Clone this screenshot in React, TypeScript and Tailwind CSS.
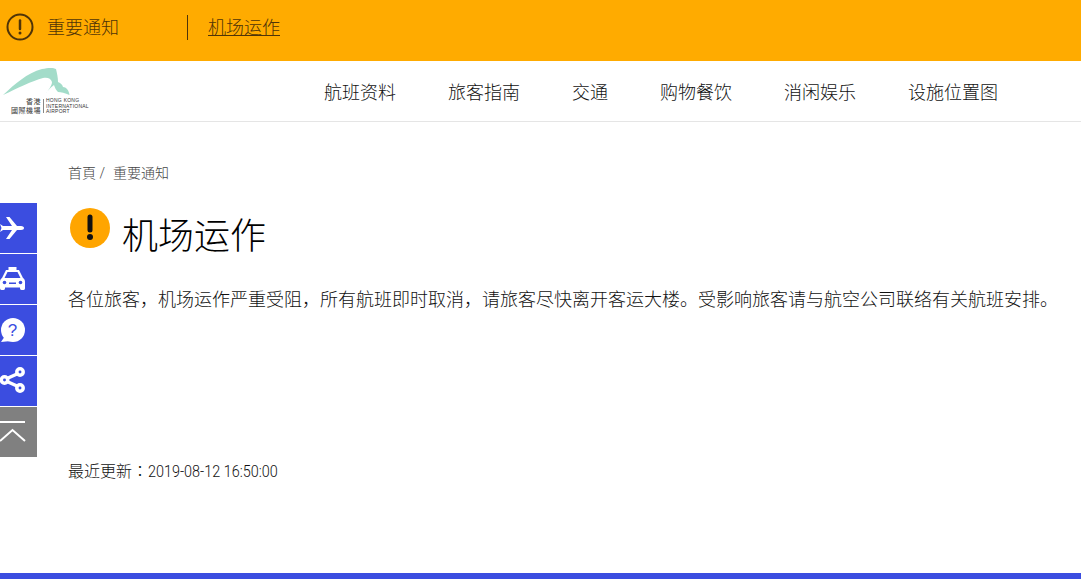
const navItems = ["航班资料", "旅客指南", "交通", "购物餐饮", "消闲娱乐", "设施位置图"];

function Logo() {
  return (
    <div className="relative h-[50px] w-[92px]">
      <svg width="72" height="30" viewBox="0 66 72 30" className="absolute left-0 top-0">
        <path
          d="M3 95 C15 84 27 73 42 69 C48 67.500 54 67.500 56 69 C57 73 58 78 58 82 C61 83 62.500 85 63 87 C66 87 69 90 69.500 95 C65 93 61 92 58 92 C56 90 55 88 54 85 C50 88 47 91 45 95 C48 90 52 86 52 82 C51 78 47 77 43 78 C32 81 18 88 3 95 Z"
          fill="#a3dcc9"
        />
      </svg>
      <div className="absolute right-[51px] top-[31px] text-right font-['Noto_Sans_CJK_TC',sans-serif] text-[7px] leading-[9px] tracking-[0.5px] text-[#333]">
        <div>香港</div>
        <div>國際機場</div>
      </div>
      <div className="absolute left-[43px] top-[33px] h-[14px] border-l border-[#888]" />
      <div className="absolute left-[46px] top-[32px] font-['Liberation_Sans',sans-serif] text-[5px] leading-[5.5px] tracking-[0.25px] text-[#333]">
        <div>HONG KONG</div>
        <div>INTERNATIONAL</div>
        <div>AIRPORT</div>
      </div>
    </div>
  );
}

function Rail() {
  return (
    <div className="absolute left-0 top-[203px] flex w-[37px] flex-col gap-px">
      <div className="h-[50px] bg-[#3b4de0]">
        <svg width="37" height="50" viewBox="0 0 37 50" fill="white">
          <path d="M0 21 L3 23 L12 23 L6 14 L9.500 14 L17 23 L21 23 C23 23 24 24 24 25 C24 26 23 27 21 27 L17 27 L9.500 36 L6 36 L12 27 L3 27 L0 29 L1.500 25 Z" />
        </svg>
      </div>
      <div className="h-[50px] bg-[#3b4de0]">
        <svg width="37" height="50" viewBox="0 0 37 50" fill="white">
          <path d="M8.500 13 H16.500 V16 H19 L23 24 C24.500 25 25 26 25 28 V34 C25 35 24.500 36 23.500 36 H21.500 C20.500 36 20 35 20 34 V33.500 H5 V34 C5 35 4.500 36 3.500 36 H1.500 C0.500 36 0 35 0 34 V28 C0 26 0.500 25 2 24 L6 16 H8.500 Z M7.500 18 L4.500 24 H20.500 L17.500 18 Z" fillRule="evenodd" />
          <rect x="9" y="28.500" width="7" height="1.500" fill="#3b4de0" />
          <circle cx="4.500" cy="28.500" r="1.800" fill="#3b4de0" />
          <circle cx="20.500" cy="28.500" r="1.800" fill="#3b4de0" />
        </svg>
      </div>
      <div className="h-[50px] bg-[#3b4de0]">
        <svg width="37" height="50" viewBox="0 0 37 50" fill="white">
          <circle cx="13" cy="25" r="12" />
          <path d="M5 31 L1 37 L11 36 Z" />
          <text x="12.500" y="31" fontSize="17" textAnchor="middle" fill="#3b4de0" fontFamily="Liberation Sans, sans-serif">?</text>
        </svg>
      </div>
      <div className="h-[50px] bg-[#3b4de0]">
        <svg width="37" height="50" viewBox="0 0 37 50" fill="none" stroke="white" strokeWidth="3.500">
          <path d="M7 22.500 L17 18 M7 25.500 L17 30" />
          <circle cx="4.500" cy="24" r="3.200" />
          <circle cx="20" cy="16" r="3.200" />
          <circle cx="20" cy="32" r="3.200" />
        </svg>
      </div>
      <div className="h-[50px] bg-[#808080]">
        <svg width="37" height="50" viewBox="0 0 37 50" fill="none" stroke="white" strokeWidth="2">
          <path d="M0 15 H25" />
          <path d="M0 34 L12.500 23 L25 34" />
        </svg>
      </div>
    </div>
  );
}

export default function App() {
  return (
    <div className="relative flex h-[579px] flex-col overflow-hidden bg-white font-['Roboto','Noto_Sans_CJK_SC',sans-serif] text-[#111]">
      <div className="flex h-[61px] shrink-0 items-center bg-[#ffab00] pb-[6px] text-[#4f3408]">
        <svg width="28" height="28" viewBox="0 0 28 28" fill="none" className="ml-[6px] -translate-y-[1px]">
          <circle cx="14" cy="14" r="12.500" stroke="#4f3408" strokeWidth="2" />
          <path d="M14 7.500 V16" stroke="#4f3408" strokeWidth="2.500" strokeLinecap="round" />
          <circle cx="14" cy="20" r="1.500" fill="#4f3408" />
        </svg>
        <span className="ml-[13px] w-[140px] text-lg font-light">重要通知</span>
        <div className="h-[25px] border-l border-[#4f3408]" />
        <a className="ml-5 text-lg font-light underline">机场运作</a>
      </div>

      <header className="flex h-[61px] shrink-0 items-start border-b border-[#e5e5e5] pt-[5px]">
        <Logo />
        <nav className="ml-[232px] mt-[13px] flex gap-[52px] text-lg font-light leading-[28px]">
          {navItems.map((item) => (
            <span key={item}>{item}</span>
          ))}
        </nav>
      </header>

      <main className="flex-1 pl-[68px]">
        <div className="mt-[43px] text-sm font-light leading-4 text-[#444]">
          首頁 /<span className="ml-[8px]">重要通知</span>
        </div>
        <div className="mt-[27px] flex items-start pl-[2px]">
          <svg width="40" height="40" viewBox="0 0 40 40" className="shrink-0">
            <circle cx="20" cy="20" r="20" fill="#ffa500" />
            <path d="M20 9 V22" stroke="#111" strokeWidth="5" strokeLinecap="round" />
            <circle cx="20" cy="29" r="3" fill="#111" />
          </svg>
          <h1 className="ml-[12px] mt-[4px] text-4xl font-light leading-[50px] text-black">机场运作</h1>
        </div>
        <p className="mt-[26px] whitespace-nowrap text-lg font-light leading-6">
          各位旅客，机场运作严重受阻，所有航班即时取消，请旅客尽快离开客运大楼。受影响旅客请与航空公司联络有关航班安排。
        </p>
        <p className="mt-[146px] text-base font-light leading-6">
          最近更新<span className="font-['Noto_Sans_CJK_TC',sans-serif]">：</span>
          <span className="inline-block origin-left scale-x-90">2019-08-12 16:50:00</span>
        </p>
      </main>

      <div className="h-[6px] shrink-0 bg-[#3b4de0]" />
      <Rail />
    </div>
  );
}
